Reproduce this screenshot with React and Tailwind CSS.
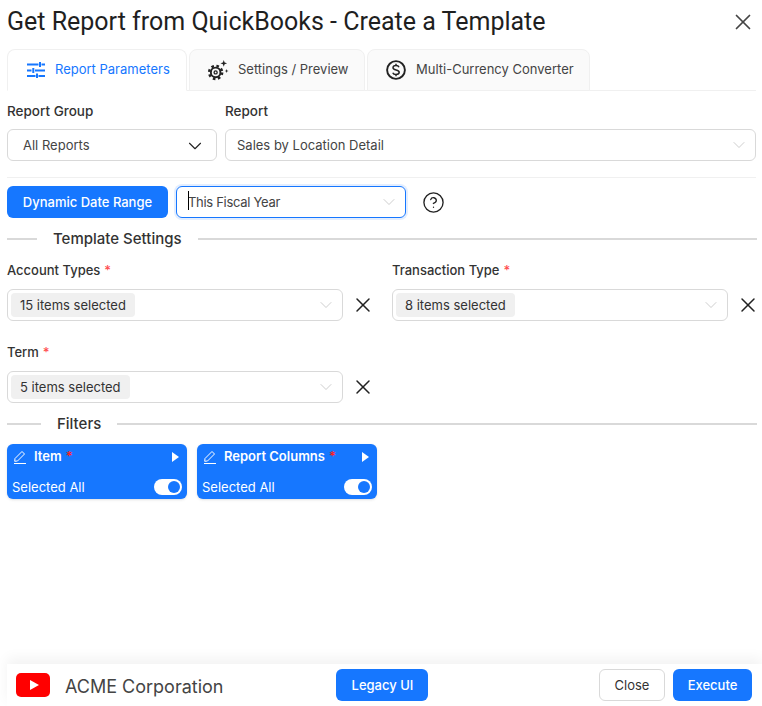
import React from 'react';
import { ChevronDown, X, CircleHelp } from 'lucide-react';

const Chevron = () => <ChevronDown className="w-5 h-5 text-[#c4c4c4]" strokeWidth={1} />;

const SlidersIcon = () => (
    <svg viewBox="0 0 18 16" className="w-[18px] h-4 text-[#1677ff]" fill="none" stroke="currentColor" strokeWidth="2">
        <path d="M0 2.500h11.500M14.500 2.500H18M13 0v5M0 8.500h4.500M8 8.500h10M6.300 6v5M0 14h8.500M11.500 14H18M10 11.500V16" />
    </svg>
);

const GearIcon = () => (
    <svg viewBox="0 0 22 22" className="w-[21px] h-[21px] text-[#222]" fill="none" stroke="currentColor">
        <circle cx="8" cy="13" r="5" strokeWidth="2" />
        <circle cx="8" cy="13" r="6.800" strokeWidth="2.600" strokeDasharray="2.700 2.640" />
        <circle cx="8" cy="13" r="1.600" strokeWidth="1.400" />
        <path d="M16.500 0l.9 2.600L20 3.500l-2.600.9-.9 2.600-.9-2.600L13 3.500l2.600-.9zM19.500 9.500l.5 1.500 1.500.5-1.500.5-.5 1.500-.5-1.500-1.500-.5 1.500-.5z" fill="currentColor" stroke="none" />
    </svg>
);

const DollarIcon = () => (
    <svg viewBox="0 0 20 20" className="w-5 h-5 text-[#222]" fill="none" stroke="currentColor">
        <circle cx="10" cy="10" r="8.900" strokeWidth="1.900" />
        <path d="M13 7.300c-.4-1.100-1.500-1.700-3-1.700-1.800 0-3 .9-3 2.200 0 3 6.200 1.500 6.200 4.500 0 1.400-1.300 2.200-3.200 2.200-1.600 0-2.800-.6-3.200-1.800M10 3.800v1.800M10 14.500v1.800" strokeWidth="1.500" />
    </svg>
);

const Tab = ({ icon, label, active, width }) => (
    <div className={`${width} h-[42px] -mb-px flex items-center border border-[#f0f0f0] rounded-t-lg ${active ? 'bg-white border-b-white text-[#1677ff]' : 'bg-[#fafafa] text-[#444]'}`}>
        {icon}
        {label}
    </div>
);

const Select = ({ value, width, tag, focused }) => (
    <div className={`${width} h-8 flex items-center justify-between rounded-md border ${focused ? 'border-[#1677ff] shadow-[0_0_0_2px_rgba(22,119,255,0.12)]' : 'border-[#d9d9d9]'} ${tag ? 'pl-[3px]' : 'pl-[11px]'} pr-[6px]`}>
        {tag ? (
            <span className="h-6 pt-0.5 px-[9px] flex items-center rounded bg-[#f0f0f0] text-[#333]">{value}</span>
        ) : focused ? (
            <span className="relative pt-0.5 text-[#444] tracking-[-0.3px]">
                <span className="absolute left-0 top-0 w-px h-[19px] bg-black" />
                {value}
            </span>
        ) : (
            <span className="pt-0.5 text-[#444]">{value}</span>
        )}
        <Chevron />
    </div>
);

const Label = ({ children, required, large }) => (
    <div className={`h-[22px] pt-0.5 flex items-center font-medium text-[#333] ${large ? 'text-[13.5px]' : ''}`}>
        {children}
        {required && <span className="ml-1 text-[#ff4d4f]">*</span>}
    </div>
);

const Clear = () => <X className="w-6 h-6 text-[#222]" strokeWidth={1.5} />;

const SectionTitle = ({ children, lead }) => (
    <div className="flex items-center h-5 -mr-px text-[15px] font-medium text-[#333]">
        <div className={`${lead} h-0.5 bg-[#d9d9d9]`} />
        <span className="px-4">{children}</span>
        <div className="flex-1 h-0.5 bg-[#d9d9d9]" />
    </div>
);

const FilterCard = ({ label }) => (
    <div className="w-[180px] h-[55px] flex flex-col justify-between rounded-md bg-[#1677ff] text-white px-[5px] py-1 shadow-sm">
        <div className="flex items-center h-[17px]">
            <svg viewBox="0 0 14 14" className="w-[14px] h-[14px] ml-px" fill="none" stroke="white" strokeWidth="1">
                <path d="M2 8.500L9 1.500l2.500 2.500-7 7-2.800.3zM1 13.500h12" />
            </svg>
            <span className="ml-[7px] font-semibold">{label}</span>
            <span className="ml-1 text-[#ff2020] font-semibold">*</span>
            <svg viewBox="0 0 8 10" className="w-2 h-[10px] ml-auto mr-[3px]" fill="white">
                <path d="M1 0l7 5-7 5z" />
            </svg>
        </div>
        <div className="flex items-center justify-between h-4">
            <span className="pt-0.5">Selected All</span>
            <div className="w-7 h-4 rounded-full bg-white flex items-center justify-end pr-0.5">
                <div className="w-3 h-3 rounded-full bg-[#1677ff]" />
            </div>
        </div>
    </div>
);

const App = () => {
    return (
        <div className="w-[762px] h-[706px] flex flex-col overflow-hidden bg-white text-[13px] font-['Inter',sans-serif]">
            <div className="flex-1 pl-[7px] pr-[6px] pt-2">
                <div className="flex items-center justify-between h-7 mb-[13px]">
                    <h1 className="text-[25px] text-[#1f1f1f] font-['Roboto',sans-serif]">Get Report from QuickBooks - Create a Template</h1>
                    <X className="w-[26px] h-[26px] text-[#444]" strokeWidth={1.6} />
                </div>

                <div className="flex gap-[2px] border-b border-[#f0f0f0]">
                    <Tab active width="w-[180px]" label="Report Parameters" icon={<span className="ml-[19px] mr-[10px]"><SlidersIcon /></span>} />
                    <Tab width="w-[176px]" label="Settings / Preview" icon={<span className="ml-[18px] mr-[9px]"><GearIcon /></span>} />
                    <Tab width="w-[223px]" label="Multi-Currency Converter" icon={<span className="ml-[18px] mr-[10px]"><DollarIcon /></span>} />
                </div>

                <div className="flex gap-2 mt-2">
                    <div>
                        <Label large>Report Group</Label>
                        <div className="mt-2 w-[210px] h-8 pt-px flex items-center justify-between pl-[15px] pr-[10px] rounded-md border border-[#d9d9d9] text-[#444]">
                            All Reports
                            <ChevronDown className="w-[22px] h-[22px] text-[#222]" strokeWidth={1.2} />
                        </div>
                    </div>
                    <div className="flex-1">
                        <Label large>Report</Label>
                        <div className="mt-2">
                            <Select width="w-full" value="Sales by Location Detail" />
                        </div>
                    </div>
                </div>

                <div className="h-px bg-[#f0f0f0] mt-4 mb-2" />

                <div className="flex items-center">
                    <div className="w-[161px] h-8 pt-0.5 flex items-center justify-center rounded-md bg-[#1677ff] text-white font-medium">Dynamic Date Range</div>
                    <div className="ml-2">
                        <Select focused width="w-[230px]" value="This Fiscal Year" />
                    </div>
                    <CircleHelp className="ml-4 w-[23px] h-[23px] text-[#222]" strokeWidth={1.4} />
                </div>

                <div className="mt-[11px]">
                    <SectionTitle lead="w-[30px]">Template Settings</SectionTitle>
                </div>

                <div className="flex mt-[10px]">
                    <div className="w-[385px] shrink-0">
                        <Label required>Account Types</Label>
                        <div className="mt-2 flex items-center">
                            <Select tag width="w-[336px]" value="15 items selected" />
                            <span className="ml-2"><Clear /></span>
                        </div>
                    </div>
                    <div className="shrink-0">
                        <Label required>Transaction Type</Label>
                        <div className="mt-2 flex items-center">
                            <Select tag width="w-[336px]" value="8 items selected" />
                            <span className="ml-2"><Clear /></span>
                        </div>
                    </div>
                </div>

                <div className="mt-5">
                    <Label required>Term</Label>
                    <div className="mt-2 flex items-center">
                        <Select tag width="w-[336px]" value="5 items selected" />
                        <span className="ml-2"><Clear /></span>
                    </div>
                </div>

                <div className="mt-[11px]">
                    <SectionTitle lead="w-[34px]">Filters</SectionTitle>
                </div>

                <div className="flex gap-[10px] mt-[10px]">
                    <FilterCard label="Item" />
                    <FilterCard label="Report Columns" />
                </div>
            </div>

            <div className="h-[42px] ml-[7px] flex items-center pl-[9px] pr-[10px] bg-white shadow-[0_-6px_12px_rgba(0,0,0,0.05)]">
                <svg viewBox="0 0 34 24" className="w-[34px] h-6">
                    <rect width="34" height="24" rx="5" fill="#ff0000" />
                    <path d="M14 7v10l9-5z" fill="white" />
                </svg>
                <span className="ml-[15px] pt-0.5 text-[18px] text-[#444]">ACME Corporation</span>
                <div className="ml-[113px] w-[92px] h-8 pt-px flex items-center justify-center rounded-md bg-[#1677ff] text-white font-medium">Legacy UI</div>
                <div className="ml-auto w-[66px] h-8 pt-px flex items-center justify-center rounded-md border border-[#d9d9d9] text-[#333]">Close</div>
                <div className="ml-2 w-[79px] h-8 pt-px flex items-center justify-center rounded-md bg-[#1677ff] text-white font-medium">Execute</div>
            </div>
        </div>
    );
};

export default App;
